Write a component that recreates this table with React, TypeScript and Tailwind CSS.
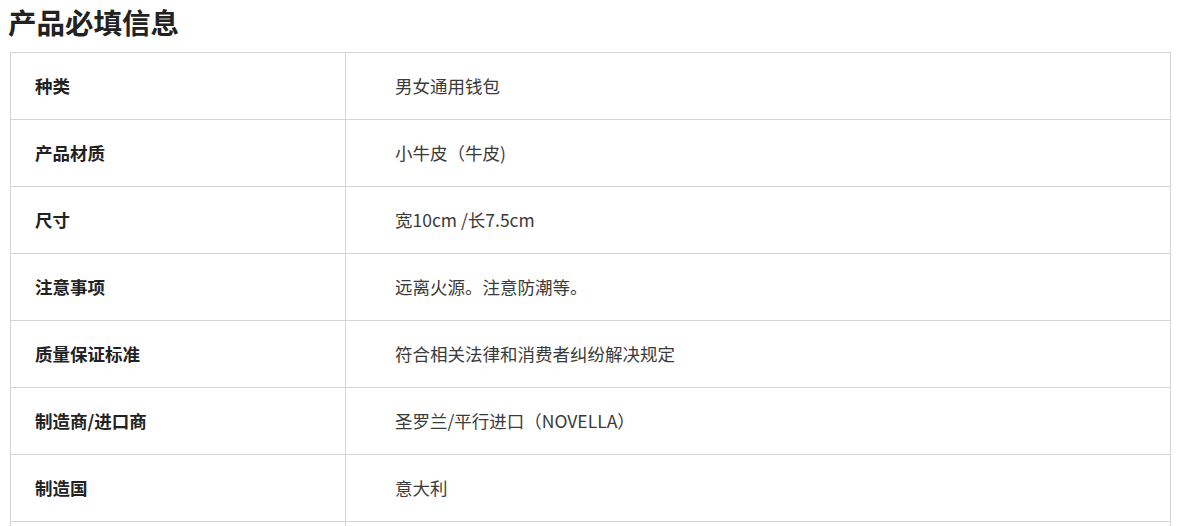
import React from "react";

type SpecRow = {
  label: string;
  value: string;
};

const rows: Array<SpecRow> = [
  { label: "种类", value: "男女通用钱包" },
  { label: "产品材质", value: "小牛皮（牛皮)" },
  { label: "尺寸", value: "宽10cm /长7.5cm" },
  { label: "注意事项", value: "远离火源。注意防潮等。" },
  { label: "质量保证标准", value: "符合相关法律和消费者纠纷解决规定" },
  { label: "制造商/进口商", value: "圣罗兰/平行进口（NOVELLA）" },
  { label: "制造国", value: "意大利" },
  { label: "", value: "" },
];

const App = () => {
  return (
    <div
      className="bg-white min-h-screen"
      style={{ fontFamily: '"Noto Sans CJK SC", "Noto Sans", sans-serif' }}
    >
      <h2 className="pl-[8px] pt-[8px] text-[28.5px] leading-[28px] font-bold text-[#222]">
        产品必填信息
      </h2>
      <div className="ml-[10px] mt-[16px] w-[1161px] border-t border-l border-[#d5d5d5]">
        {rows.map((row, i) => (
          <div className="flex" key={i}>
            <div className="w-[335px] h-[67px] flex items-center pl-[24px] border-r border-b border-[#d5d5d5] text-[17.5px] font-bold text-[#222]">
              {row.label}
            </div>
            <div className="flex-1 h-[67px] flex items-center pl-[49px] border-r border-b border-[#d5d5d5] text-[17.5px] text-[#3a3a3a]">
              {row.value}
            </div>
          </div>
        ))}
      </div>
    </div>
  );
};

export default App;
